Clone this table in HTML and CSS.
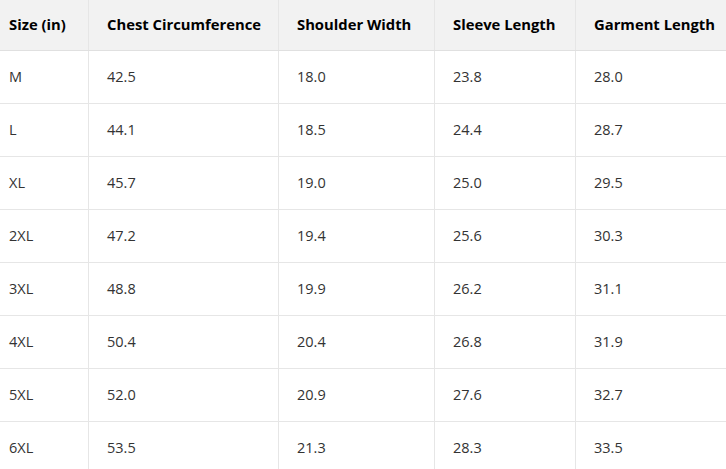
FILE: index.html
```html
<!DOCTYPE html>
<html>
<head>
<meta charset="utf-8">
<link rel="stylesheet" href="styles.css">
</head>
<body>
<div class="wrap">
<table class="size-table">
  <colgroup>
    <col class="c1"><col class="c2"><col class="c3"><col class="c4"><col class="c5">
  </colgroup>
  <thead>
    <tr><th>Size (in)</th><th>Chest Circumference</th><th>Shoulder Width</th><th>Sleeve Length</th><th>Garment Length</th></tr>
  </thead>
  <tbody>
    <tr><td>M</td><td>42.5</td><td>18.0</td><td>23.8</td><td>28.0</td></tr>
    <tr><td>L</td><td>44.1</td><td>18.5</td><td>24.4</td><td>28.7</td></tr>
    <tr><td>XL</td><td>45.7</td><td>19.0</td><td>25.0</td><td>29.5</td></tr>
    <tr><td>2XL</td><td>47.2</td><td>19.4</td><td>25.6</td><td>30.3</td></tr>
    <tr><td>3XL</td><td>48.8</td><td>19.9</td><td>26.2</td><td>31.1</td></tr>
    <tr><td>4XL</td><td>50.4</td><td>20.4</td><td>26.8</td><td>31.9</td></tr>
    <tr><td>5XL</td><td>52.0</td><td>20.9</td><td>27.6</td><td>32.7</td></tr>
    <tr><td>6XL</td><td>53.5</td><td>21.3</td><td>28.3</td><td>33.5</td></tr>
  </tbody>
</table>
</div>
</body>
</html>
```
FILE: styles.css
```css
html, body {
  margin: 0;
  padding: 0;
  background: #fff;
  overflow: hidden;
}
.wrap {
  margin-left: -10px;
  width: 760px;
}
.size-table {
  border-collapse: collapse;
  table-layout: fixed;
  width: 760px;
  font-family: "Open Sans", "Noto Sans", sans-serif;
  font-size: 14.5px;
  color: #333;
}
.c1 { width: 98px; }
.c2 { width: 190px; }
.c3 { width: 156px; }
.c4 { width: 141px; }
.c5 { width: 175px; }
.size-table th,
.size-table td {
  text-align: left;
  padding: 0 18px;
  border: 1px solid #e6e6e6;
  border-top: none;
  white-space: nowrap;
}
.size-table th {
  height: 50px;
  padding-bottom: 2px;
  box-sizing: border-box;
  background: #f2f2f2;
  font-weight: 700;
  font-size: 14.8px;
  color: #000;
  border-bottom: 1px solid #e0e0e0;
}
.size-table td {
  height: 52px;
}
```
